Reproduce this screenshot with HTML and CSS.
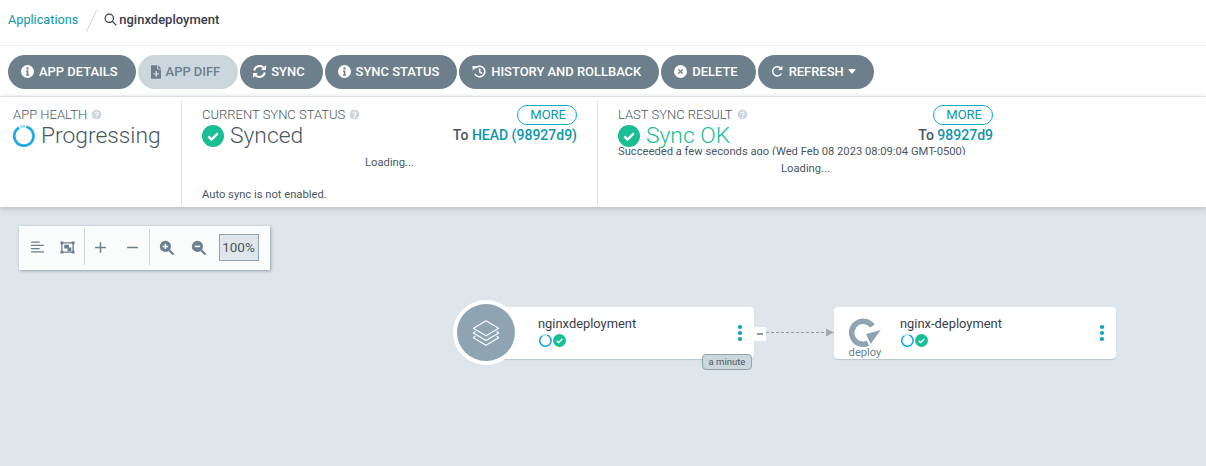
FILE: index.html
```html
<!DOCTYPE html>
<html lang="en">
<head>
  <meta charset="UTF-8" />
  <title>nginxdeployment - Applications</title>
  <link rel="stylesheet" href="styles.css">
</head>
<body>
  <svg class="defs" width="0" height="0">
    <symbol id="i-info" viewBox="1.500 1.500 13 13">
      <path fill="currentColor" fill-rule="evenodd" d="M8 1.500a6.500 6.500 0 1 0 0 13 6.500 6.500 0 0 0 0-13zM8 3.700a1.200 1.200 0 1 1 0 2.400 1.200 1.200 0 0 1 0-2.400zM6.500 7h2.400v4h.7v1.200H6.400V11h.8V8.200h-.7z"/>
    </symbol>
    <symbol id="i-check" viewBox="0 0 24 24">
      <circle cx="12" cy="12" r="12" fill="#18be94"/>
      <path d="M6.800 12.400l3.600 3.400 6.800-6.600" fill="none" stroke="#fff" stroke-width="2.600"/>
    </symbol>
    <symbol id="i-spin" viewBox="0 0 24 24">
      <path d="M14.500 1.900A10.500 10.500 0 1 1 6.500 3" fill="none" stroke="#1fa9e8" stroke-width="3"/>
      <path d="M7.500 2.500A10.500 10.500 0 0 1 13.500 1.600" fill="none" stroke="#a6def4" stroke-width="3"/>
    </symbol>
    <symbol id="i-help" viewBox="0 0 12 12">
      <circle cx="6" cy="6" r="5.300" fill="#ccd6dd"/>
      <path d="M4.400 4.800a1.600 1.600 0 1 1 2.400 1.400c-.6.3-.8.6-.8 1.100" fill="none" stroke="#fff" stroke-width="1.200"/>
      <circle cx="6" cy="9" r=".8" fill="#fff"/>
    </symbol>
    <symbol id="i-dots" viewBox="0 0 6 18">
      <circle cx="3" cy="3" r="2.100"/><circle cx="3" cy="9" r="2.100"/><circle cx="3" cy="15" r="2.100"/>
    </symbol>
  </svg>

  <header class="topbar">
    <a class="crumb">Applications</a>
    <span class="slash"></span>
    <svg class="search" viewBox="0 0 14 14"><circle cx="5.700" cy="5.700" r="4.500"/><path d="M9 9l4.200 4.200"/></svg>
    <span class="app-name">nginxdeployment</span>
  </header>

  <div class="actions">
    <button class="btn">
      <svg class="ico"><use href="#i-info"/></svg>APP DETAILS
    </button>
    <button class="btn btn-off">
      <svg class="ico ico-file" viewBox="2 1 11 14"><path fill="currentColor" fill-rule="evenodd" d="M2 1h6.500v4.500H13V15H2zM9.500 1L13 4.500H9.500zM6.800 7v2.200H4.600v1.500h2.200V13h1.500v-2.300h2.200V9.200H8.300V7z"/></svg>APP DIFF
    </button>
    <button class="btn">
      <svg class="ico" viewBox="1.500 1.500 13 13"><path fill="none" stroke="currentColor" stroke-width="2" d="M2.700 7a5.500 5.500 0 0 1 9.400-2.800M13.300 9a5.500 5.500 0 0 1-9.400 2.800"/><path fill="currentColor" d="M14.500 1.500v5H9.500zM1.500 14.500v-5h5z"/></svg>SYNC
    </button>
    <button class="btn">
      <svg class="ico"><use href="#i-info"/></svg>SYNC STATUS
    </button>
    <button class="btn">
      <svg class="ico ico-wide" viewBox="0 1 16 14"><path fill="none" stroke="currentColor" stroke-width="1.700" d="M4 4.200A6 6 0 1 1 3.200 10.500M8.800 4.500v4l2.700 1.700"/><path fill="currentColor" d="M.5 1.800l5.200.2-4.800 4.800z"/></svg>HISTORY AND ROLLBACK
    </button>
    <button class="btn">
      <svg class="ico" viewBox="1.500 1.500 13 13"><path fill="currentColor" fill-rule="evenodd" d="M8 1.500a6.500 6.500 0 1 0 0 13 6.500 6.500 0 0 0 0-13zM6.300 5.400L8 7.100l1.700-1.700.9.900L8.900 8l1.700 1.700-.9.900L8 8.900l-1.700 1.700-.9-.9L7.100 8 5.400 6.300z"/></svg>DELETE
    </button>
    <button class="btn">
      <svg class="ico" viewBox="0 0 16 16"><path fill="none" stroke="currentColor" stroke-width="1.700" d="M12.800 10.500A5.700 5.700 0 1 1 12 4"/><path fill="currentColor" d="M14 1v5.300H8.700z"/></svg>REFRESH
      <span class="caret"></span>
    </button>
  </div>

  <section class="status">
    <div class="panel panel-health">
      <div class="label">APP HEALTH <svg class="help"><use href="#i-help"/></svg></div>
      <div class="big"><svg class="big-ico"><use href="#i-spin"/></svg>Progressing</div>
    </div>

    <div class="panel panel-wide">
      <div class="panel-head">
        <div>
          <div class="label">CURRENT SYNC STATUS <svg class="help"><use href="#i-help"/></svg></div>
          <div class="big"><svg class="big-ico"><use href="#i-check"/></svg>Synced</div>
        </div>
        <div class="side">
          <button class="more">MORE</button>
          <div class="rev">To <a>HEAD (98927d9)</a></div>
        </div>
      </div>
      <div class="loading loading-sync">Loading...</div>
      <div class="note">Auto sync is not enabled.</div>
    </div>

    <div class="panel panel-last">
      <div class="panel-head">
        <div>
          <div class="label">LAST SYNC RESULT <svg class="help"><use href="#i-help"/></svg></div>
          <div class="big big-ok"><svg class="big-ico"><use href="#i-check"/></svg>Sync OK</div>
        </div>
        <div class="side">
          <button class="more">MORE</button>
          <div class="rev">To <a>98927d9</a></div>
        </div>
      </div>
      <div class="clip-line">Succeeded a few seconds ago (Wed Feb 08 2023 08:09:04 GMT-0500)</div>
      <div class="loading">Loading...</div>
    </div>
  </section>

  <main class="canvas">
    <div class="zoombar">
      <div class="zoom-group zoom-view">
        <svg class="tool" viewBox="0 0 14 14"><path d="M1 2h8M1 5h12M1 8h8M1 11h12" fill="none" stroke="currentColor" stroke-width="1.200"/></svg>
        <svg class="tool" viewBox="0 0 16 14"><path fill="none" stroke="currentColor" stroke-width="1.400" d="M2 2h12v10H2z"/><path fill="currentColor" d="M.5.500h3v3h-3zM12.500.500h3v3h-3zM.5 10.500h3v3h-3zM12.500 10.500h3v3h-3zM4.500 4h5v3h2.500v4h-4V8H4.500z"/></svg>
      </div>
      <div class="zoom-group zoom-step">
        <svg class="tool" viewBox="0 0 14 14"><path d="M7 2v10M2 7h10" stroke="currentColor" stroke-width="1.400"/></svg>
        <svg class="tool" viewBox="0 0 14 14"><path d="M2 7h10" stroke="currentColor" stroke-width="1.400"/></svg>
      </div>
      <div class="zoom-group zoom-last">
        <svg class="tool" viewBox="0 0 14 14"><circle cx="6" cy="6" r="5.200" fill="currentColor"/><path d="M9.500 9.500l4 4" stroke="currentColor" stroke-width="2"/><path d="M6 3.500v5M3.500 6h5" stroke="#fff" stroke-width="1.400"/></svg>
        <svg class="tool" viewBox="0 0 14 14"><circle cx="6" cy="6" r="5.200" fill="currentColor"/><path d="M9.500 9.500l4 4" stroke="currentColor" stroke-width="2"/><path d="M3.500 6h5" stroke="#fff" stroke-width="1.400"/></svg>
        <span class="zoom-val">100%</span>
      </div>
    </div>

    <!-- graph: nodes sit on a free canvas -->
    <div class="node node-app">
      <div class="node-text">
        <div class="node-name">nginxdeployment</div>
        <div class="node-status">
          <svg class="mini"><use href="#i-spin"/></svg><svg class="mini"><use href="#i-check"/></svg>
        </div>
      </div>
      <svg class="dots"><use href="#i-dots"/></svg>
      <span class="age">a minute</span>
    </div>
    <div class="app-disc">
      <svg viewBox="0 0 32 30" fill="none" stroke="#fff" stroke-width="1.100" stroke-linejoin="round">
        <path d="M16 2l13.500 8L16 18 2.500 10z"/>
        <path d="M4.800 13.200L2.500 15 16 23l13.500-8-2.300-1.800"/>
        <path d="M4.800 18.200L2.500 20 16 28l13.500-8-2.300-1.800"/>
      </svg>
    </div>
    <div class="collapse"><span></span></div>
    <svg class="edge" viewBox="0 0 68 11"><path d="M0 5.500h60" stroke="#8d9ba5" stroke-width="1" stroke-dasharray="3 2" fill="none"/><path d="M60 1.500l8 4-8 4z" fill="#a3a9ae"/></svg>

    <div class="node node-deploy">
      <div class="kind">
        <svg viewBox="0 0 34 30"><path d="M24.500 9A11.500 11.500 0 1 0 20 26.200" fill="none" stroke="#8fa4b1" stroke-width="5.500"/><path d="M32.700 13L18 17l4.700 10z" fill="#8fa4b1"/></svg>
        <span>deploy</span>
      </div>
      <div class="node-text">
        <div class="node-name">nginx-deployment</div>
        <div class="node-status">
          <svg class="mini"><use href="#i-spin"/></svg><svg class="mini"><use href="#i-check"/></svg>
        </div>
      </div>
      <svg class="dots"><use href="#i-dots"/></svg>
    </div>
  </main>
</body>
</html>
```

FILE: styles.css
```css
:root {
  --slate: #6d7f8b;
  --teal: #0b97ab;
  --text: #495763;
  --line: #eff2f4;
  --canvas: #dee6eb;
}

* {
  box-sizing: border-box;
  margin: 0;
  padding: 0;
}

html, body {
  height: 100%;
  overflow: hidden;
}

body {
  font-family: Roboto, sans-serif;
  color: var(--text);
  background: #fff;
  display: flex;
  flex-direction: column;
}

.defs {
  position: absolute;
}

/* top bar */
.topbar {
  height: 46px;
  flex: none;
  display: flex;
  align-items: center;
  padding: 0 0 7px 8px;
  border-bottom: 1px solid var(--line);
}

.crumb {
  color: var(--teal);
  font-size: 12.700px;
}

.slash {
  width: 1px;
  height: 24px;
  margin: 3px 11px 0 13px;
  background: #ccd6dd;
  transform: rotate(25deg);
}

.search {
  width: 13px;
  height: 13px;
  margin: 0 2px 0 1px;
  fill: none;
  stroke: #363c4a;
  stroke-width: 1.300;
}

.app-name {
  font-size: 13px;
  font-weight: 500;
  color: #363c4a;
}

/* action buttons */
.actions {
  height: 51px;
  flex: none;
  display: flex;
  align-items: flex-start;
  gap: 2px;
  padding: 9px 8px 0;
  border-bottom: 1px solid var(--line);
}

.btn {
  height: 34px;
  display: flex;
  align-items: center;
  gap: 5px;
  padding: 0 18px 1px 13px;
  border: none;
  border-radius: 17px;
  background: var(--slate);
  color: #fff;
  font: 500 12.950px Roboto, sans-serif;
}

.btn-off {
  background: #ccd6dd;
  color: var(--slate);
}

.ico {
  width: 13px;
  height: 13px;
  flex: none;
}

.ico-file {
  width: 10.500px;
  height: 14px;
  margin-right: -0.500px;
}

.ico-wide {
  width: 14px;
  height: 13px;
}

.caret {
  width: 0;
  height: 0;
  margin-left: -1px;
  border: 4.500px solid transparent;
  border-top: 5px solid #fff;
  border-bottom: none;
}

/* status panels */
.status {
  height: 110px;
  flex: none;
  display: flex;
  padding-bottom: 2px;
  background: #fff;
  box-shadow: 0 1px 6px rgba(73, 87, 99, 0.35);
  position: relative;
  z-index: 1;
}

.panel {
  padding: 7px 20px 0;
  border-right: 1px solid #dfe5e9;
  margin-top: 3px;
}

.panel-health {
  width: 182px;
  padding-left: 13px;
}

.panel-wide {
  width: 416px;
}

.panel-last {
  width: 415px;
  border-right: none;
}

.panel-head {
  display: flex;
  justify-content: space-between;
}

.label {
  font-size: 13px;
  font-weight: 300;
  line-height: 15px;
  display: flex;
  align-items: center;
  gap: 4px;
}

.help {
  width: 11px;
  height: 11px;
}

.big {
  display: flex;
  align-items: center;
  gap: 6px;
  margin: 1px 0 -1px;
  font-size: 22.800px;
  font-weight: 300;
  line-height: 26px;
}

.big-ok {
  color: #18be94;
}

.big-ico {
  width: 22px;
  height: 22px;
}

.side {
  text-align: right;
}

.more {
  display: block;
  width: 60px;
  height: 20px;
  margin: -2px 0 0 auto;
  padding-right: 10px;
  border: 1px solid #0dadc1;
  border-radius: 10px;
  background: #fff;
  color: var(--teal);
  font: 400 13px/18px Roboto, sans-serif;
  text-align: right;
}

.rev {
  font-size: 14px;
  font-weight: 500;
  line-height: 16px;
  margin-top: 2px;
}

.rev a {
  color: var(--teal);
}

.loading {
  font-size: 11.200px;
  line-height: 13px;
  text-align: center;
  margin-top: 7px;
}

.loading-sync {
  margin-top: 8px;
}

.note {
  font-size: 11.200px;
  line-height: 13px;
  margin-top: 19px;
}

.clip-line {
  font-size: 11.200px;
  line-height: 13px;
  height: 10px;
  margin-top: -3px;
  overflow: hidden;
  white-space: nowrap;
}

/* graph canvas */
.canvas {
  flex: 1;
  position: relative;
  background: var(--canvas);
}

.zoombar {
  position: absolute;
  left: 19px;
  top: 19px;
  width: 251px;
  height: 44px;
  display: flex;
  align-items: flex-start;
  padding-top: 3px;
  background: #fafbfb;
  box-shadow: 1px 1px 3px rgba(73, 87, 99, 0.5);
}

.zoom-group {
  height: 36px;
  display: flex;
  align-items: center;
  border-right: 1px solid #ccd6dd;
  color: var(--slate);
}

.zoom-view {
  gap: 15px;
  padding: 0 9px 0 11px;
}

.zoom-step {
  gap: 17px;
  padding: 0 8.500px 0 8px;
}

.zoom-last {
  gap: 17px;
  padding-left: 9px;
  border-right: none;
}

.tool {
  width: 15px;
  height: 15px;
  flex: none;
}

.zoom-val {
  width: 40px;
  height: 27px;
  margin-left: -4px;
  border: 1px solid #8fa4b1;
  background: var(--canvas);
  font-size: 13.500px;
  line-height: 25px;
  text-align: center;
  color: var(--text);
}

.node {
  position: absolute;
  height: 52px;
  display: flex;
  align-items: flex-start;
  background: #fff;
  border-radius: 4px;
  box-shadow: 0 1px 1px #b8c4cc;
}

.node-app {
  left: 484px;
  top: 100px;
  width: 270px;
  padding-left: 54px;
}

.node-deploy {
  left: 834px;
  top: 100px;
  width: 282px;
  padding-left: 66px;
}

.node-text {
  flex: 1;
  padding-top: 9px;
}

.node-name {
  font-size: 12.900px;
  line-height: 16px;
  color: #363c4a;
}

.node-status {
  display: flex;
  gap: 1px;
  margin: 2px 0 0 1px;
}

.mini {
  width: 13px;
  height: 13px;
}

.dots {
  width: 6px;
  height: 18px;
  margin: 16.500px 11px 0 0;
  fill: #0ba5b8;
}

.app-disc {
  position: absolute;
  left: 453px;
  top: 93px;
  width: 66px;
  height: 65px;
  display: flex;
  align-items: center;
  justify-content: center;
  border: 4px solid #fff;
  border-radius: 50%;
  background: #8fa4b1;
}

.app-disc svg {
  width: 30px;
  height: 30px;
}

.age {
  position: absolute;
  right: 2px;
  bottom: -11px;
  width: 50px;
  height: 16px;
  border: 1px solid #8fa4b1;
  border-radius: 4px;
  background: #ccd6dd;
  font-size: 9.500px;
  line-height: 14px;
  text-align: center;
  color: var(--text);
}

.collapse {
  position: absolute;
  left: 754px;
  top: 120px;
  width: 12px;
  height: 14px;
  display: flex;
  align-items: center;
  justify-content: center;
  background: #fff;
}

.collapse span {
  width: 6px;
  height: 2px;
  background: #8d9ba5;
}

.edge {
  position: absolute;
  left: 766px;
  top: 120px;
  width: 68px;
  height: 11px;
}

.kind {
  position: absolute;
  left: 14px;
  top: 10px;
  width: 34px;
  text-align: center;
  color: var(--slate);
}

.kind svg {
  display: block;
  width: 34px;
  height: 30px;
}

.kind span {
  display: block;
  font-size: 11.200px;
  line-height: 12px;
}
```
